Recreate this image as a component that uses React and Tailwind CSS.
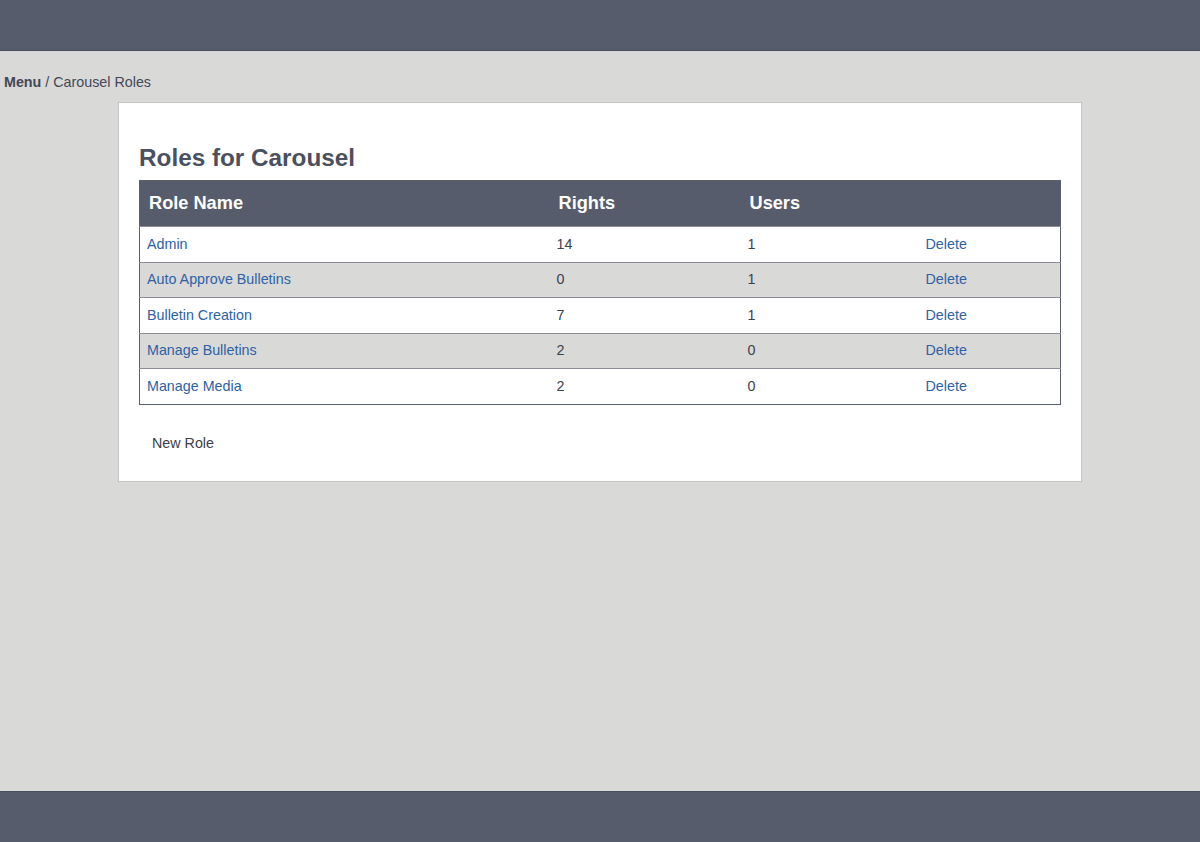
const roles = [
  { name: "Admin", rights: 14, users: 1 },
  { name: "Auto Approve Bulletins", rights: 0, users: 1 },
  { name: "Bulletin Creation", rights: 7, users: 1 },
  { name: "Manage Bulletins", rights: 2, users: 0 },
  { name: "Manage Media", rights: 2, users: 0 },
];

export default function App() {
  return (
    <div
      className="flex min-h-[842px] flex-col bg-[#d9d9d7] text-[#3b404c]"
      style={{ fontFamily: '"Liberation Sans", Arial, Helvetica, sans-serif' }}
    >
      <header className="h-[51px] border-b border-[#4a5060] bg-[#565c6c]" />

      <main className="flex-1">
        <nav className="px-1 pt-[22px] text-[14.3px] leading-[18px] text-[#434856]">
          <a href="#" className="font-bold text-[#434856]">Menu</a> / Carousel Roles
        </nav>

        <div className="mx-auto mt-[11px] w-[964px] border border-[#c4c4c4] bg-white px-[20px] pb-[30px] pt-[41px]">
          <h1 className="mb-[8px] text-[24.3px] font-bold leading-[28px] text-[#4a5060]">
            Roles for Carousel
          </h1>

          <table className="w-[922px] table-fixed border-collapse border border-[#5a5f6c] text-[14.3px]">
            <colgroup>
              <col className="w-[410px]" />
              <col className="w-[191px]" />
              <col className="w-[178px]" />
              <col />
            </colgroup>
            <thead>
              <tr className="h-[46px] bg-[#565c6c] text-left text-[18.2px] font-bold text-white">
                <th className="px-[9px]">Role Name</th>
                <th className="px-[9px]">Rights</th>
                <th className="px-[9px]">Users</th>
                <th className="px-[9px]" />
              </tr>
            </thead>
            <tbody>
              {roles.map((r, i) => (
                <tr
                  key={r.name}
                  className={`h-[35.6px] border-t border-[#8a8d95] ${i % 2 === 1 ? "bg-[#d9d9d7]" : "bg-white"}`}
                >
                  <td className="px-[7px]">
                    <a href="#" className="text-[#2d62a6]">{r.name}</a>
                  </td>
                  <td className="px-[7px] text-[#3b404c]">{r.rights}</td>
                  <td className="px-[7px] text-[#3b404c]">{r.users}</td>
                  <td className="px-[7px]">
                    <a href="#" className="text-[#2d62a6]">Delete</a>
                  </td>
                </tr>
              ))}
            </tbody>
          </table>

          <div className="mt-[30px] pl-[13px] text-[14.3px] leading-[16px] text-[#3b404c]">
            New Role
          </div>
        </div>
      </main>

      <footer className="h-[51px] border-t border-[#4a5060] bg-[#565c6c]" />
    </div>
  );
}
